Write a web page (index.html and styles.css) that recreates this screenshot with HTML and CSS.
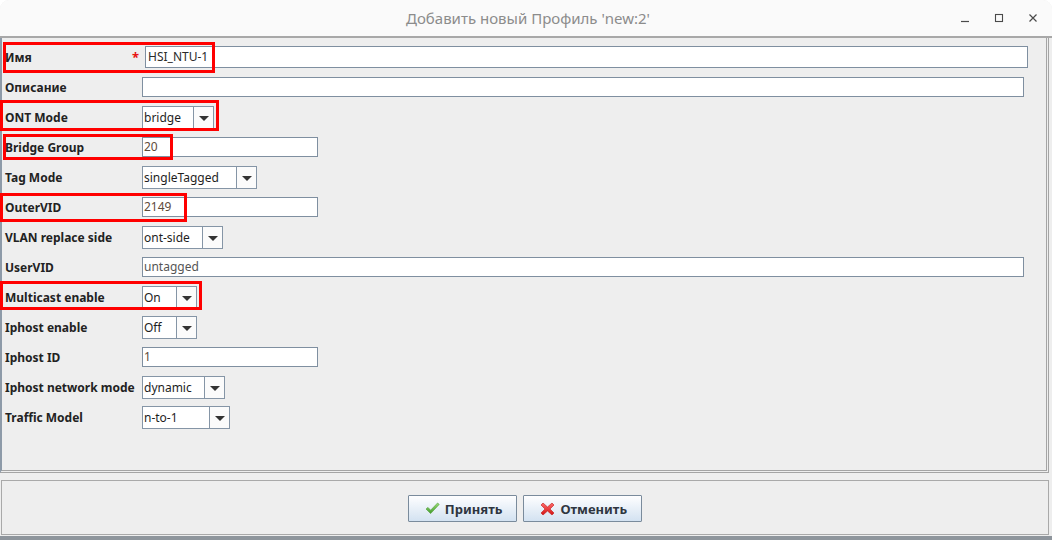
FILE: index.html
```html
<!DOCTYPE html>
<html lang="ru">

<head>
  <meta charset="UTF-8">
  <title>Добавить новый Профиль 'new:2'</title>
  <link rel="stylesheet" href="styles.css">
</head>

<body>

  <div class="window">
    <div class="titlebar">
      <div class="title">Добавить новый Профиль 'new:2'</div>
      <div class="controls">
        <svg class="ctl" width="10" height="10" viewBox="0 0 10 10"><path d="M1 8.5 H9" stroke="#4a4a4a" stroke-width="1.2"/></svg>
        <svg class="ctl" width="10" height="10" viewBox="0 0 10 10"><rect x="1.5" y="1.5" width="7" height="7" fill="none" stroke="#4a4a4a" stroke-width="1.1"/></svg>
        <svg class="ctl" width="10" height="10" viewBox="0 0 10 10"><path d="M1.5 1.5 L8.5 8.5 M8.5 1.5 L1.5 8.5" stroke="#4a4a4a" stroke-width="1.2"/></svg>
      </div>
    </div>

    <div class="main">
      <div class="row">
        <div class="label">Имя<span class="req">*</span></div>
        <div class="field name">HSI_NTU-1</div>
      </div>
      <div class="row">
        <div class="label">Описание</div>
        <div class="field wide"></div>
      </div>
      <div class="row">
        <div class="label">ONT Mode</div>
        <div class="combo w72"><span class="combo-text">bridge</span><span class="combo-arrow"></span></div>
      </div>
      <div class="row">
        <div class="label">Bridge Group</div>
        <div class="field short num">20</div>
      </div>
      <div class="row">
        <div class="label">Tag Mode</div>
        <div class="combo w115"><span class="combo-text">singleTagged</span><span class="combo-arrow"></span></div>
      </div>
      <div class="row">
        <div class="label">OuterVID</div>
        <div class="field short num">2149</div>
      </div>
      <div class="row">
        <div class="label">VLAN replace side</div>
        <div class="combo w81"><span class="combo-text">ont-side</span><span class="combo-arrow"></span></div>
      </div>
      <div class="row">
        <div class="label">UserVID</div>
        <div class="field wide muted">untagged</div>
      </div>
      <div class="row">
        <div class="label">Multicast enable</div>
        <div class="combo w55"><span class="combo-text">On</span><span class="combo-arrow"></span></div>
      </div>
      <div class="row">
        <div class="label">Iphost enable</div>
        <div class="combo w55"><span class="combo-text">Off</span><span class="combo-arrow"></span></div>
      </div>
      <div class="row">
        <div class="label">Iphost ID</div>
        <div class="field short num">1</div>
      </div>
      <div class="row">
        <div class="label">Iphost network mode</div>
        <div class="combo w83"><span class="combo-text">dynamic</span><span class="combo-arrow"></span></div>
      </div>
      <div class="row">
        <div class="label">Traffic Model</div>
        <div class="combo w88"><span class="combo-text">n-to-1</span><span class="combo-arrow"></span></div>
      </div>
    </div>

    <div class="footer">
      <button class="btn">
        <svg width="15" height="13" viewBox="0 0 15 13">
          <defs>
            <linearGradient id="ok" x1="0" y1="0" x2="0" y2="1">
              <stop offset="0" stop-color="#9fe07a"/>
              <stop offset="1" stop-color="#3f9a2a"/>
            </linearGradient>
          </defs>
          <path d="M1 7 L3 5.4 L5.6 8.2 L12.6 1 L14.2 2.4 L5.6 11.6 Z" fill="url(#ok)" stroke="#4c9a34" stroke-width="0.6"/>
        </svg>
        Принять
      </button>
      <button class="btn">
        <svg width="15" height="14" viewBox="0 0 15 14">
          <defs>
            <linearGradient id="no" x1="0" y1="0" x2="0" y2="1">
              <stop offset="0" stop-color="#ff6a6a"/>
              <stop offset="1" stop-color="#d41414"/>
            </linearGradient>
          </defs>
          <path d="M1 3 L3 1 L7.5 5 L12 1 L14 3 L10 7 L14 11 L12 13 L7.5 9 L3 13 L1 11 L5 7 Z" fill="url(#no)" stroke="#c01818" stroke-width="0.6"/>
        </svg>
        Отменить
      </button>
    </div>

    <!-- красные рамки поверх полей -->
    <div class="mark mark-name"></div>
    <div class="mark mark-mode"></div>
    <div class="mark mark-group"></div>
    <div class="mark mark-vid"></div>
    <div class="mark mark-mcast"></div>
  </div>

</body>
</html>
```

FILE: styles.css
```css
body {
  margin: 0;
  background: #ffffff;
  font-family: "Noto Sans", "Liberation Sans", sans-serif;
}

.window {
  position: relative;
  width: 1052px;
  height: 540px;
  background: #eeeeee;
  border-radius: 9px 9px 0 0;
  overflow: hidden;
  box-sizing: border-box;
  border-bottom: 4px solid #8e959c;
}

.titlebar {
  height: 36px;
  background: #fafafa;
  border-bottom: 2px solid #a8a8a8;
  display: flex;
  align-items: center;
  justify-content: center;
  position: relative;
}

.title {
  font-size: 15px;
  color: #8c8c8c;
  margin-left: 4px;
}

.controls {
  position: absolute;
  right: 14px;
  top: 13px;
  display: flex;
  gap: 24px;
}

.main {
  width: 1049px;
  height: 435px;
  box-sizing: border-box;
  padding: 4px 0 0 3px;
  border-left: 2px solid #8d9aa8;
  border-right: 3px double #a4a4a4;
  border-bottom: 3px double #a4a4a4;
}

.row {
  height: 30px;
  display: flex;
  align-items: center;
}

.label {
  width: 137px;
  flex-shrink: 0;
  font-size: 12px;
  font-weight: bold;
  color: #222222;
  position: relative;
}

.req {
  position: absolute;
  right: 3px;
  top: -1px;
  color: #e81010;
  font-size: 13px;
}

.field {
  box-sizing: border-box;
  height: 20px;
  background: #ffffff;
  border: 1px solid #7f8fa0;
  font-size: 12px;
  line-height: 18px;
  padding-left: 1px;
  color: #333333;
}

.name {
  width: 883px;
  height: 22px;
  line-height: 20px;
  margin-left: 3px;
  padding-left: 2px;
  color: #2a2a2a;
}

.wide {
  width: 882px;
}

.short {
  width: 176px;
}

.num {
  color: #5e4a3a;
}

.muted {
  color: #555555;
}

.combo {
  box-sizing: border-box;
  height: 23px;
  display: flex;
  border: 1px solid #8595a6;
  background: #ffffff;
}

.combo-text {
  flex: 1;
  font-size: 12px;
  line-height: 21px;
  padding-left: 1px;
  color: #1e1e1e;
  border-right: 1px solid #8595a6;
}

.combo-arrow {
  width: 19px;
  background: #fbfbfb;
  position: relative;
}

.combo-arrow::after {
  content: "";
  position: absolute;
  left: 5px;
  top: 9px;
  border-left: 5px solid transparent;
  border-right: 5px solid transparent;
  border-top: 5px solid #333333;
}

.w55 { width: 55px; }
.w72 { width: 72px; }
.w81 { width: 81px; }
.w83 { width: 83px; }
.w88 { width: 88px; }
.w115 { width: 115px; }

.footer {
  margin: 7px 3px 0 1px;
  height: 55px;
  box-sizing: border-box;
  border: 1px solid #a9a9a9;
  display: flex;
  justify-content: center;
  align-items: flex-start;
  gap: 6px;
  padding: 14px 0 0 0;
}

.btn {
  height: 27px;
  box-sizing: border-box;
  border: 1px solid #7a8b9c;
  border-radius: 1px;
  background: linear-gradient(#fefeff, #d3e2f1);
  font-family: "Noto Sans", "Liberation Sans", sans-serif;
  font-size: 13px;
  font-weight: bold;
  color: #2e3540;
  display: flex;
  align-items: center;
  gap: 5px;
  padding: 0 14px 0 16px;
}

.mark {
  position: absolute;
  border: 3px solid #ff0000;
  box-sizing: border-box;
}

.mark-name { left: 3px; top: 42px; width: 212px; height: 31px; }
.mark-mode { left: 0; top: 100px; width: 219px; height: 31px; }
.mark-group { left: 3px; top: 134px; width: 170px; height: 26px; }
.mark-vid { left: 0; top: 193px; width: 187px; height: 29px; }
.mark-mcast { left: 0; top: 281px; width: 202px; height: 29px; }
```
